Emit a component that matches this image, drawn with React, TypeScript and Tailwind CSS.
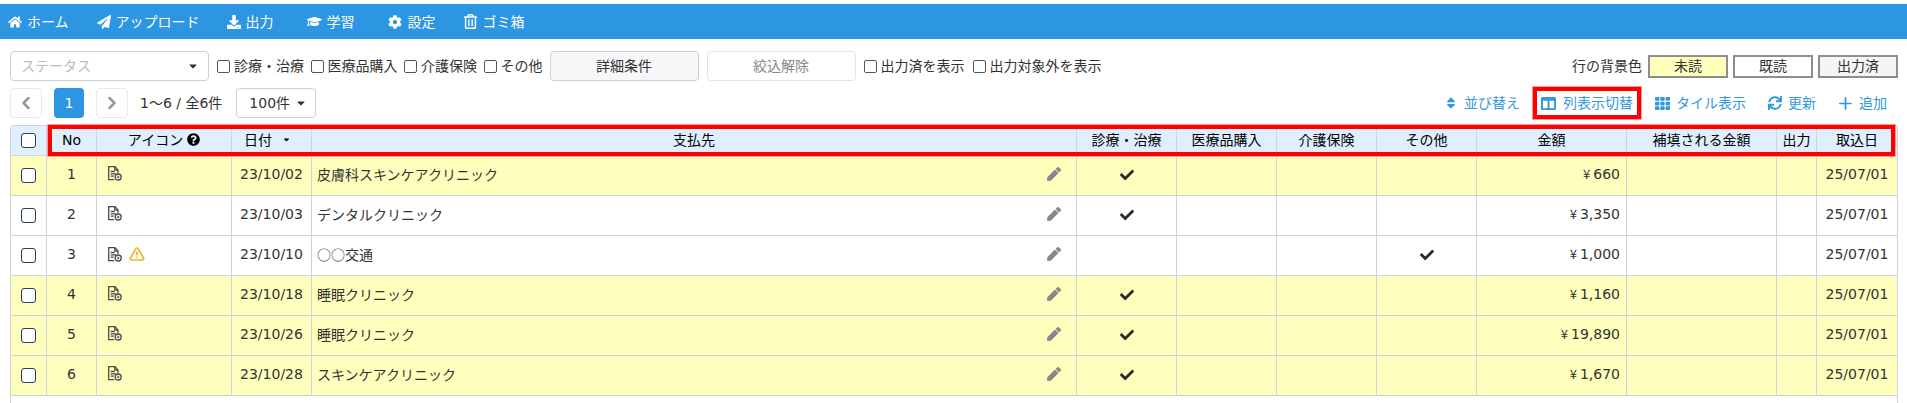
import React from "react";
import { ChevronLeft, ChevronRight, Plus, TriangleAlert } from "lucide-react";
import {
  FaCaretDown,
  FaCheck,
  FaCog,
  FaColumns,
  FaDownload,
  FaGraduationCap,
  FaHome,
  FaPaperPlane,
  FaPen,
  FaQuestionCircle,
  FaRegTrashAlt,
  FaSort,
  FaSync,
  FaTh,
} from "react-icons/fa";

const rows = [
  { no: 1, date: "23/10/02", payee: "皮膚科スキンケアクリニック", col: 0, amount: "660", unread: true },
  { no: 2, date: "23/10/03", payee: "デンタルクリニック", col: 0, amount: "3,350", unread: false },
  { no: 3, date: "23/10/10", payee: "○○交通", col: 3, amount: "1,000", unread: false, warn: true },
  { no: 4, date: "23/10/18", payee: "睡眠クリニック", col: 0, amount: "1,160", unread: true },
  { no: 5, date: "23/10/26", payee: "睡眠クリニック", col: 0, amount: "19,890", unread: true },
  { no: 6, date: "23/10/28", payee: "スキンケアクリニック", col: 0, amount: "1,670", unread: true },
];

const FileIcon = () => (
  <svg width="14" height="15" viewBox="0 0 14 15" fill="none" stroke="#4a4a4a" strokeWidth="1.3">
    <path d="M10 7V4L7 .7H.7v13h5.5" />
    <path d="M6.8 1v3.2H10" />
    <path d="M2.7 5.5h4M2.7 7.8h5.5M2.7 10.1h3" />
    <circle cx="10.2" cy="11" r="3" fill="#fff" />
    <path d="M10.2 9.7v2.6M9 11h2.4" strokeWidth="1" />
  </svg>
);

const FilterCheck = ({ label }: { label: string }) => (
  <label className="flex items-center gap-[4px]">
    <input type="checkbox" className="appearance-none w-[13px] h-[13px] border border-[#555] rounded-[2px] bg-white" />
    <span>{label}</span>
  </label>
);

const RowCheck = () => (
  <input type="checkbox" className="appearance-none block mx-auto w-[15px] h-[15px] border-[1.5px] border-[#2c3e50] rounded-[3px] bg-white" />
);

const Action = ({ icon, label }: { icon: React.ReactNode; label: string }) => (
  <span className="flex items-center gap-[6px]">
    {icon}
    {label}
  </span>
);

const th = "border-r border-b border-[#d0d3de] font-normal text-black text-center p-0 pb-[2px]";
const td = "border-r border-b border-[#d0d3de] p-0";
const tdText = td + " pb-[3px]";

export default function App() {
  return (
    <div className="h-[403px] w-[1907px] overflow-hidden bg-white pt-1 text-sm text-[#333] font-['DejaVu_Sans','Noto_Sans_CJK_JP',sans-serif]">
      {/* nav */}
      <div className="flex h-[35px] items-center bg-[#2d96e3] pl-2 text-white">
        <span className="flex items-center gap-[5px]"><FaHome size={14} />ホーム</span>
        <span className="ml-[28px] flex items-center gap-[5px]"><FaPaperPlane size={14} />アップロード</span>
        <span className="ml-[27px] flex items-center gap-[5px]"><FaDownload size={14} />出力</span>
        <span className="ml-[33px] flex items-center gap-[5px]"><FaGraduationCap size={15} />学習</span>
        <span className="ml-[33px] flex items-center gap-[6px]"><FaCog size={14} />設定</span>
        <span className="ml-[27px] flex items-center gap-[5px]"><FaRegTrashAlt size={15} />ゴミ箱</span>
      </div>

      {/* filters */}
      <div className="mt-3 flex h-[30px] items-center pl-[10px] pr-[9px]">
        <div className="flex h-[30px] w-[199px] items-center justify-between rounded border border-[#ccd0d7] pl-[10px] pr-[9px] text-[#bbb]">
          ステータス
          <FaCaretDown size={12} className="text-[#333]" />
        </div>
        <div className="ml-2 flex items-center gap-[6.5px]">
          <FilterCheck label="診療・治療" />
          <FilterCheck label="医療品購入" />
          <FilterCheck label="介護保険" />
          <FilterCheck label="その他" />
        </div>
        <button className="ml-[7px] h-[30px] w-[149px] rounded border border-[#ccd0d7] bg-[#f6f7f9]">詳細条件</button>
        <button className="ml-2 h-[30px] w-[149px] rounded border border-[#e2e4e8] text-[#888]">絞込解除</button>
        <div className="ml-2 flex items-center gap-2">
          <FilterCheck label="出力済を表示" />
          <FilterCheck label="出力対象外を表示" />
        </div>
        <div className="ml-auto flex items-center">
          <span className="mr-[6px]">行の背景色</span>
          <span className="flex h-[23px] w-[80px] items-center justify-center border-2 border-[#8d8d8d] bg-[#ffffbd]">未読</span>
          <span className="ml-[5px] flex h-[23px] w-[80px] items-center justify-center border-2 border-[#8d8d8d] bg-white">既読</span>
          <span className="ml-[5px] flex h-[23px] w-[80px] items-center justify-center border-2 border-[#8d8d8d] bg-[#f5f5f5]">出力済</span>
        </div>
      </div>

      {/* pager and actions */}
      <div className="mt-[7px] flex h-[30px] items-center pl-[10px] pr-[20px]">
        <span className="flex h-[30px] w-[32px] items-center justify-center rounded border border-[#e8e9ec] text-[#999]"><ChevronLeft size={20} strokeWidth={3} /></span>
        <span className="ml-3 flex h-[30px] w-[30px] items-center justify-center rounded bg-[#2d96e3] text-white">1</span>
        <span className="ml-3 flex h-[30px] w-[32px] items-center justify-center rounded border border-[#e8e9ec] text-[#999]"><ChevronRight size={20} strokeWidth={3} /></span>
        <span className="ml-3">1〜6 / 全6件</span>
        <div className="ml-[14px] flex h-[30px] w-[80px] items-center justify-between rounded border border-[#ccd0d7] pl-3 pr-2">
          100件
          <FaCaretDown size={12} />
        </div>
        <div className="ml-auto flex items-center text-[#3498db]">
          <Action icon={<FaSort size={14} />} label="並び替え" />
          <span className="ml-[13px] flex h-[32px] w-[108px] items-center justify-center gap-[7px] border-[4px] border-[#ff0000] shadow-[0_0_0_1px_#ff9a9a]">
            <FaColumns size={15} />
            列表示切替
          </span>
          <span className="ml-[14px]"><Action icon={<FaTh size={15} />} label="タイル表示" /></span>
          <span className="ml-[22px]"><Action icon={<FaSync size={14} />} label="更新" /></span>
          <span className="ml-[20px] flex items-center gap-[4px]"><Plus size={19} strokeWidth={2.2} />追加</span>
        </div>
      </div>

      {/* table */}
      <div className="relative ml-[10px] mt-[7px] h-[278px] w-[1888px] rounded-t border-x border-t border-[#d0d3de]">
        <table className="w-[1886px] table-fixed border-separate border-spacing-0">
          <colgroup>
            <col className="w-[36px]" />
            <col className="w-[50px]" />
            <col className="w-[135px]" />
            <col className="w-[80px]" />
            <col className="w-[765px]" />
            <col className="w-[100px]" />
            <col className="w-[100px]" />
            <col className="w-[100px]" />
            <col className="w-[100px]" />
            <col className="w-[150px]" />
            <col className="w-[150px]" />
            <col className="w-[40px]" />
            <col className="w-[80px]" />
          </colgroup>
          <thead>
            <tr className="h-[30px] bg-[#dfefff]">
              <th className={td}><RowCheck /></th>
              <th className={th}>No</th>
              <th className={th}>
                <span className="inline-flex items-center gap-[4px]">アイコン<FaQuestionCircle size={13} /></span>
              </th>
              <th className={th}>
                <span className="inline-flex items-center gap-[10px] pr-[8px]">日付<FaCaretDown size={9} /></span>
              </th>
              <th className={th}>支払先</th>
              <th className={th}>診療・治療</th>
              <th className={th}>医療品購入</th>
              <th className={th}>介護保険</th>
              <th className={th}>その他</th>
              <th className={th}>金額</th>
              <th className={th}>補填される金額</th>
              <th className={th}>出力</th>
              <th className={th + " border-r-0"}>取込日</th>
            </tr>
          </thead>
          <tbody>
            {rows.map((r) => (
              <tr key={r.no} className={"h-[40px] " + (r.unread ? "bg-[#ffffbd]" : "bg-white")}>
                <td className={td}><RowCheck /></td>
                <td className={tdText + " text-center"}>{r.no}</td>
                <td className={td + " align-top"}>
                  <div className="flex items-center gap-[7px] pl-[11px] pt-[10px]">
                    <FileIcon />
                    {r.warn && <TriangleAlert size={16} strokeWidth={2.5} className="text-[#f0b429]" />}
                  </div>
                </td>
                <td className={tdText + " text-center"}>{r.date}</td>
                <td className={tdText}>
                  <div className="flex items-center justify-between pl-[5px] pr-[15px] font-['Noto_Sans_CJK_JP',sans-serif]">
                    {r.payee}
                    <FaPen size={14} className="text-[#888]" />
                  </div>
                </td>
                {[0, 1, 2, 3].map((c) => (
                  <td key={c} className={td + " pb-[2px] text-center"}>
                    {r.col === c && <FaCheck size={14} className="mx-auto text-[#2b2b2b]" />}
                  </td>
                ))}
                <td className={tdText + " pr-[6px] text-right"}>
                  <span className="font-['Noto_Sans_CJK_JP',sans-serif] mr-[3px] text-[13px]">¥</span>
                  {r.amount}
                </td>
                <td className={td}></td>
                <td className={td}></td>
                <td className={tdText + " border-r-0 text-center"}>25/07/01</td>
              </tr>
            ))}
          </tbody>
        </table>
        {/* red highlight over the header */}
        <div className="pointer-events-none absolute left-[37px] top-[-1px] h-[31px] w-[1847px] border-[4px] border-[#ff0000] shadow-[0_0_0_1px_#ff9a9a]" />
      </div>
    </div>
  );
}
